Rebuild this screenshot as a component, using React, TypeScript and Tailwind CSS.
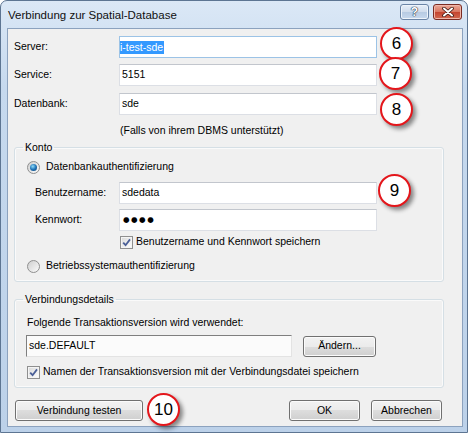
import React from "react";

const FONT = "font-['Liberation_Sans',Arial,sans-serif]";

const BTN =
  "flex items-center justify-center rounded-[3px] border border-[#707070] bg-[linear-gradient(to_bottom,#f2f2f2_0%,#ebebeb_50%,#dddddd_50%,#cfcfcf_100%)] shadow-[inset_0_0_0_1px_#fbfbfb] text-black";

function Radio({ checked }: { checked?: boolean }) {
  return (
    <span className="flex h-[13px] w-[13px] shrink-0 items-center justify-center rounded-full border border-[#8f8f8f] bg-[linear-gradient(135deg,#cfcfcf,#fbfbfb)]">
      {checked && (
        <span className="h-[7px] w-[7px] rounded-full bg-[radial-gradient(circle_at_40%_35%,#8fdcf8_0%,#1f73b8_50%,#0b3e6e_100%)]" />
      )}
    </span>
  );
}

function Check() {
  return (
    <span className="flex h-[13px] w-[13px] shrink-0 items-center justify-center border border-[#8f8f8f] bg-[linear-gradient(135deg,#d8d8d8,#ffffff)] shadow-[inset_0_0_0_1px_#f4f4f4]">
      <svg width="9" height="9" viewBox="0 0 9 9">
        <path d="M1.2 4.6 L3.6 7.2 L8 1.4" stroke="#4a5f97" strokeWidth="1.8" fill="none" />
      </svg>
    </span>
  );
}

function Badge({ n, className }: { n: number; className: string }) {
  return (
    <div
      className={
        "absolute flex h-[33px] w-[33px] items-center justify-center rounded-full border-[2.5px] border-[#e4161b] bg-white text-[17px] leading-none text-black shadow-[3px_3px_4px_rgba(0,0,0,0.45)] " +
        className
      }
    >
      {n}
    </div>
  );
}

export default function App() {
  return (
    <div
      className={`relative flex h-[433px] w-[468px] flex-col rounded-t-[7px] border border-[#5d7592] bg-[linear-gradient(to_bottom,#dbe8f6_0%,#c6d9ee_20%,#bcd1e9_100%)] pb-[5px] pl-[6px] pr-[4px] text-[10.5px] text-black ${FONT}`}
    >
      {/* title bar */}
      <div className="flex h-[27px] items-start justify-between">
        <div className="ml-[1px] pt-[6px] text-[11.5px] leading-[16px] text-[#101010]">
          Verbindung zur Spatial-Database
        </div>
        <div className="mr-[1px] mt-[3px] flex gap-[4px]">
          <div className="flex h-[16px] w-[29px] items-center justify-center rounded-[3px] border border-[#6a84a6] bg-[linear-gradient(to_bottom,#e6eef8_0%,#cfdcec_50%,#b6cae2_50%,#c8d9ee_100%)] shadow-[inset_0_0_0_1px_#eef4fb]">
            <span className="text-[12px] font-bold leading-none text-white [text-shadow:0_0_1px_#1f2f45,0_0_1px_#1f2f45,0_0_1px_#1f2f45]">
              ?
            </span>
          </div>
          <div className="flex h-[16px] w-[29px] items-center justify-center rounded-[3px] border border-[#7a2b22] bg-[linear-gradient(to_bottom,#eaa897_0%,#d8745f_50%,#c4432e_50%,#d26a52_100%)] shadow-[inset_0_0_0_1px_#f0b7aa]">
            <svg width="14" height="10" viewBox="0 0 14 10">
              <path d="M3 1.5 L11 8.5 M11 1.5 L3 8.5" stroke="#3b1610" strokeWidth="3.6" strokeLinecap="round" />
              <path d="M3 1.5 L11 8.5 M11 1.5 L3 8.5" stroke="#ffffff" strokeWidth="2" strokeLinecap="round" />
            </svg>
          </div>
        </div>
      </div>

      {/* client area */}
      <div className="flex flex-1 flex-col border border-[#8ca2be] bg-[#f0f0f0]">
        <div className="mt-[7px] flex items-center pl-[6px]">
          <span className="w-[105px]">Server:</span>
          <div className="flex h-[22px] w-[258px] items-center border border-[#9cc3e6] bg-white">
            <span className="bg-[#3399ff] pr-[1px] leading-[13px] text-white">i-test-sde</span>
          </div>
        </div>
        <div className="mt-[6px] flex items-center pl-[6px]">
          <span className="w-[105px]">Service:</span>
          <div className="flex h-[22px] w-[258px] items-center border border-[#dcdfe5] border-t-[#c2c6cd] bg-white pl-[2px]">
            5151
          </div>
        </div>
        <div className="mt-[7px] flex items-center pl-[6px]">
          <span className="w-[105px]">Datenbank:</span>
          <div className="flex h-[22px] w-[258px] items-center border border-[#dcdfe5] border-t-[#c2c6cd] bg-white pl-[2px]">
            sde
          </div>
        </div>
        <div className="mt-[8px] h-[14px] pl-[112px] leading-[14px]">(Falls von ihrem DBMS unterstützt)</div>

        <fieldset className="ml-[6px] mt-[3px] w-[430px] rounded-[3px] border border-[#d5dfe5] pb-[8px] shadow-[inset_0_0_0_1px_#fafafa]">
          <legend className="ml-[8px] px-[2px] leading-[14px]">Konto</legend>
          <div className="mt-[6px] flex h-[14px] items-center gap-[6px] pl-[12px]">
            <Radio checked />
            <span>Datenbankauthentifizierung</span>
          </div>
          <div className="mt-[8px] flex items-center pl-[20px]">
            <span className="w-[84px]">Benutzername:</span>
            <div className="flex h-[22px] w-[258px] items-center border border-[#dcdfe5] border-t-[#c2c6cd] bg-white pl-[2px]">
              sdedata
            </div>
          </div>
          <div className="mt-[5px] flex items-center pl-[20px]">
            <span className="w-[84px]">Kennwort:</span>
            <div className="flex h-[22px] w-[258px] items-center border border-[#dcdfe5] border-t-[#c2c6cd] bg-white pl-[3px] font-['DejaVu_Sans',sans-serif] text-[7.5px] tracking-[1.5px]">
              ●●●●
            </div>
          </div>
          <div className="mt-[4px] flex h-[14px] items-center gap-[3px] pl-[105px]">
            <Check />
            <span>Benutzername und Kennwort speichern</span>
          </div>
          <div className="mt-[10px] flex h-[14px] items-center gap-[6px] pl-[12px]">
            <Radio />
            <span>Betriebssystemauthentifizierung</span>
          </div>
        </fieldset>

        <fieldset className="ml-[6px] mt-[10px] w-[430px] rounded-[3px] border border-[#d5dfe5] pb-[8px] shadow-[inset_0_0_0_1px_#fafafa]">
          <legend className="ml-[8px] px-[2px] leading-[14px]">Verbindungsdetails</legend>
          <div className="mt-[9px] h-[14px] pl-[12px] leading-[14px]">
            Folgende Transaktionsversion wird verwendet:
          </div>
          <div className="mt-[6px] flex items-center pl-[11px]">
            <div className="flex h-[22px] w-[266px] items-center border border-[#e3e3e3] border-l-[#7f7f7f] border-t-[#7f7f7f] bg-[#fbfbfb] pl-[2px]">
              sde.DEFAULT
            </div>
            <button className={`ml-[11px] h-[21px] w-[73px] ${BTN}`}>Ändern...</button>
          </div>
          <div className="mt-[8px] flex h-[14px] items-center gap-[3px] pl-[12px]">
            <Check />
            <span>Namen der Transaktionsversion mit der Verbindungsdatei speichern</span>
          </div>
        </fieldset>

        <div className="ml-[7px] mt-[12px] flex w-[427px] justify-between">
          <button className={`h-[21px] w-[128px] ${BTN}`}>Verbindung testen</button>
          <div className="flex gap-[11px]">
            <button
              className={`h-[21px] w-[71px] ${BTN} border-[#3c7fb1] shadow-[inset_0_0_0_1px_#c9ecfb]`}
            >
              OK
            </button>
            <button className={`h-[21px] w-[71px] ${BTN}`}>Abbrechen</button>
          </div>
        </div>
      </div>

      <Badge n={6} className="left-[379px] top-[26px]" />
      <Badge n={7} className="left-[378px] top-[56px]" />
      <Badge n={8} className="left-[379px] top-[92px]" />
      <Badge n={9} className="left-[377px] top-[173px]" />
      <Badge n={10} className="left-[146px] top-[392px]" />
    </div>
  );
}
